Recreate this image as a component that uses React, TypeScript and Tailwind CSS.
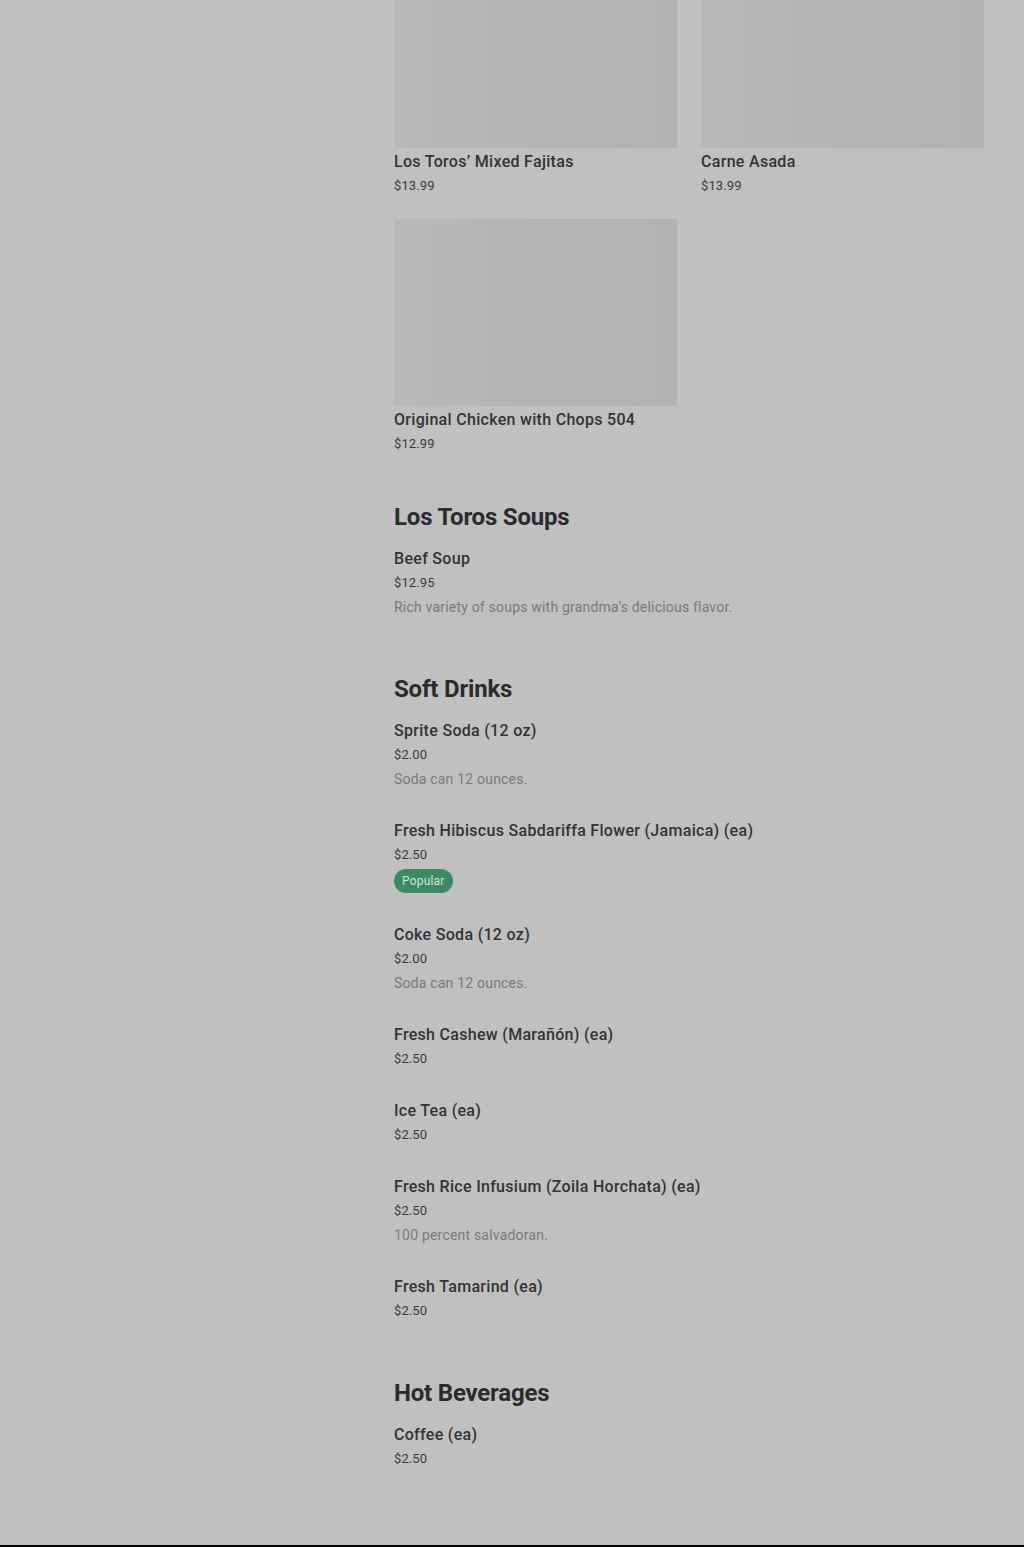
import React from "react";

type Item = {
  name: string;
  price: string;
  desc?: string;
  popular?: boolean;
};

type Section = {
  title: string;
  items: Item[];
};

const cards = [
  { name: "Los Toros’ Mixed Fajitas", price: "$13.99" },
  { name: "Carne Asada", price: "$13.99" },
  { name: "Original Chicken with Chops 504", price: "$12.99" },
];

const sections: Section[] = [
  {
    title: "Los Toros Soups",
    items: [
      {
        name: "Beef Soup",
        price: "$12.95",
        desc: "Rich variety of soups with grandma’s delicious flavor.",
      },
    ],
  },
  {
    title: "Soft Drinks",
    items: [
      { name: "Sprite Soda (12 oz)", price: "$2.00", desc: "Soda can 12 ounces." },
      {
        name: "Fresh Hibiscus Sabdariffa Flower (Jamaica) (ea)",
        price: "$2.50",
        popular: true,
      },
      { name: "Coke Soda (12 oz)", price: "$2.00", desc: "Soda can 12 ounces." },
      { name: "Fresh Cashew (Marañón) (ea)", price: "$2.50" },
      { name: "Ice Tea (ea)", price: "$2.50" },
      {
        name: "Fresh Rice Infusium (Zoila Horchata) (ea)",
        price: "$2.50",
        desc: "100 percent salvadoran.",
      },
      { name: "Fresh Tamarind (ea)", price: "$2.50" },
    ],
  },
  {
    title: "Hot Beverages",
    items: [{ name: "Coffee (ea)", price: "$2.50" }],
  },
];

const MenuCard = ({ name, price }: { name: string; price: string }) => (
  <div className="flex flex-col">
    <div className="h-[187px] w-full bg-gradient-to-r from-[#b9b9b9] via-[#b4b4b4] to-[#b2b2b2]" />
    <div className="mt-[2px] text-base leading-6 font-medium text-[#333333] tracking-[0.3px]">
      {name}
    </div>
    <div className="text-[13px] leading-6 text-[#3a3a3a] tracking-[0.1px]">{price}</div>
  </div>
);

const MenuRow = ({ item }: { item: Item }) => (
  <div className="flex flex-col pb-7">
    <div className="text-base leading-6 font-medium text-[#333333] tracking-[0.3px]">
      {item.name}
    </div>
    <div className="text-[13px] leading-6 text-[#3a3a3a] tracking-[0.1px]">{item.price}</div>
    {item.desc && (
      <div className="text-sm leading-6 text-[#7a7a7a] tracking-[0.2px]">{item.desc}</div>
    )}
    {item.popular && (
      <div className="h-7 flex items-center">
        <span className="h-6 px-2 flex items-center rounded-full bg-[#3b8a62] text-xs text-[#cfe4d7] tracking-[0.2px]">
          Popular
        </span>
      </div>
    )}
  </div>
);

export default function App() {
  return (
    <div
      className="h-[1547px] flex flex-col bg-[#c0c0c0] overflow-hidden"
      style={{ fontFamily: "Roboto, 'Liberation Sans', sans-serif" }}
    >
      <div className="flex-1 flex">
        {/* sidebar column (empty under the overlay) */}
        <aside className="w-[394px] shrink-0" />

        <main className="w-[590px] flex flex-col">
          <div className="-mt-[39px] grid grid-cols-2 gap-x-6 gap-y-[21px]">
            {cards.map((c) => (
              <MenuCard key={c.name} name={c.name} price={c.price} />
            ))}
          </div>

          <div className="pt-[19px]">
            {sections.map((s) => (
              <section key={s.title} className="pt-[26px]">
                <h2 className="text-2xl leading-8 font-bold text-[#2b2b2b] tracking-[-0.2px]">
                  {s.title}
                </h2>
                <div className="mt-[14px] flex flex-col">
                  {s.items.map((it) => (
                    <MenuRow key={it.name} item={it} />
                  ))}
                </div>
              </section>
            ))}
          </div>
        </main>
      </div>
      <div className="h-[2px] bg-black" />
    </div>
  );
}
